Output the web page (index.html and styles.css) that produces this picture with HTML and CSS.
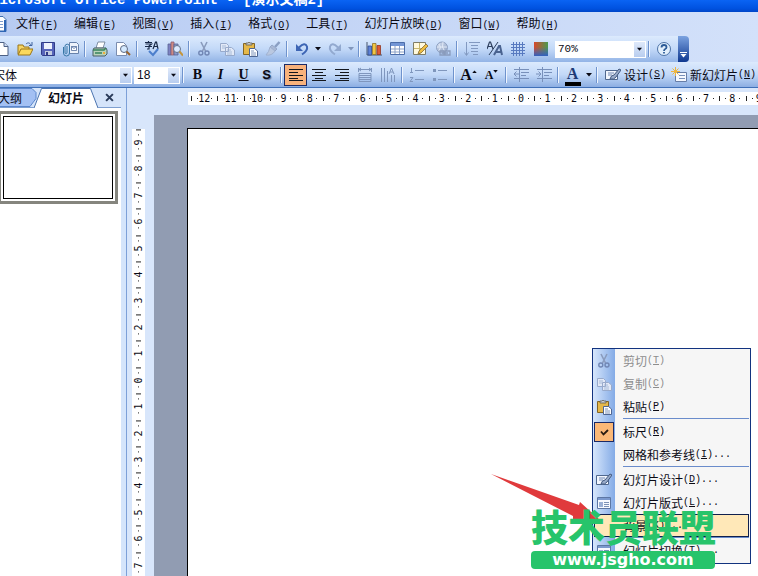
FILE: index.html
```html
<!DOCTYPE html>
<html lang="zh-CN">
<head>
<meta charset="utf-8">
<title>Microsoft Office PowerPoint - [演示文稿2]</title>
<link rel="stylesheet" href="styles.css">
</head>
<body>
<svg class="defs" aria-hidden="true">
  <defs>
    <linearGradient id="g-gray" x1="0" y1="0" x2="1" y2="1"><stop offset="0" stop-color="#d5dff0"/><stop offset="1" stop-color="#8fa3c4"/></linearGradient>
    <linearGradient id="g-r" x1="0" y1="0" x2="1" y2="0"><stop offset="0" stop-color="#d8482c"/><stop offset="1" stop-color="#4a9a50"/></linearGradient>
    <linearGradient id="g-b" x1="0" y1="0" x2="0" y2="1"><stop offset=".35" stop-color="#3565c8" stop-opacity="0"/><stop offset="1" stop-color="#3260c0"/></linearGradient>
  </defs>
  <symbol id="i-new" viewBox="0 0 16 16"><path d="M3 1.5h7l4 4v9H3z" fill="#fff" stroke="#4d6185"/><path d="M10 1.5v4h4" fill="#cddaf0" stroke="#4d6185"/></symbol>
  <symbol id="i-doc" viewBox="0 0 16 16"><path d="M3 .500h8l3 3v12H3z" fill="#fff" stroke="#3f6fae"/><path d="M13 4v11.500H3" fill="none" stroke="#2f66b4" stroke-width="2"/><path d="M5 5.500h6M5 8.500h6M5 11.500h6" stroke="#7d9ccc"/></symbol>
  <symbol id="i-open" viewBox="0 0 16 16"><path d="M1 13V4h5l1 2h5v3" fill="#f5d465" stroke="#9a7417"/><path d="M1 14l3-6h12l-3 6z" fill="#fbd95c" stroke="#9a7417"/><path d="M9 3c2-2 4-1 5 1M15 1v3.500h-3" fill="none" stroke="#3f629f"/></symbol>
  <symbol id="i-save" viewBox="0 0 16 16"><path d="M1.500 1.500h13v13h-12l-1-1z" fill="#5765ba" stroke="#303c88"/><path d="M4 2h8v6H4z" fill="#edf2fc"/><path d="M5 10h7v4H5z" fill="#c4cde0"/><path d="M6 11h2v3H6z" fill="#303c88"/></symbol>
  <symbol id="i-mail" viewBox="0 0 16 16"><path d="M6.500 1.500h7l2 2v9h-9z" fill="#eef3fb" stroke="#6781aa"/><path d="M8.500 5.500h5v4h-5zM8.500 5.500l2.500 2 2.500-2" fill="#fff" stroke="#526d9d" stroke-width=".8"/><path d="M4 5v6.500a1 1 0 0 1-2 0V5a2.300 2.300 0 0 1 4.500 0v7a3 3 0 0 1-6 0V6" fill="none" stroke="#3776a6"/></symbol>
  <symbol id="i-print" viewBox="0 0 16 16"><path d="M6 1h7l-2 6H4z" fill="#fff" stroke="#66778c" stroke-width=".8"/><path d="M2 7h12l1 2v4l-2 2H1V9z" fill="#b8d3bb" stroke="#485e67"/><path d="M1 9h11l2-2M3 12h7" fill="none" stroke="#39835e" stroke-width="1.500"/><path d="M11 12h2" stroke="#efae3a" stroke-width="2"/></symbol>
  <symbol id="i-preview" viewBox="0 0 16 16"><path d="M1.500 1.500h7l3 3v10h-10z" fill="#fff" stroke="#7b8daf"/><circle cx="9" cy="8" r="3.500" fill="#d5eaff" stroke="#5f6c86"/><path d="M11.500 10.500L15 14" stroke="#9b652c" stroke-width="2"/></symbol>
  <symbol id="i-spell" viewBox="0 0 16 16"><path d="M1 1.500h7M4.500 0v2M1.500 3h6L5 5v3H3M1 5.500h7M9 8l2.500-7h1L14 8M10 5.500h4" fill="none" stroke="#182947" stroke-width="1.200"/><path d="M5 10l4 4 5-6" fill="none" stroke="#4d7fcc" stroke-width="2"/></symbol>
  <symbol id="i-research" viewBox="0 0 16 16"><path d="M1 3h3v11H1z" fill="#7d83c3" stroke="#596393" stroke-width=".8"/><path d="M4 1h3v13H4z" fill="#cf8b83" stroke="#8b5d73" stroke-width=".8"/><path d="M7 3h4v11H7z" fill="#8998ca" stroke="#596393" stroke-width=".8"/><circle cx="10" cy="8" r="3.500" fill="#dceaff" stroke="#64728a"/><path d="M12.500 10.500L16 14.500" stroke="#c4953c" stroke-width="2"/></symbol>
  <symbol id="i-cut" viewBox="0 0 16 16"><path d="M5 1l4.500 9M11 1L6.500 10" fill="none" stroke="#8a9bbd" stroke-width="1.600"/><circle cx="4.800" cy="12" r="2" fill="none" stroke="#7186b4" stroke-width="1.400"/><circle cx="11" cy="12" r="2" fill="none" stroke="#7186b4" stroke-width="1.400"/></symbol>
  <symbol id="i-copy" viewBox="0 0 16 16"><path d="M1.500 2.500h6l2 2v6h-8zM6.500 6.500h6l3 2.500v5.500h-9z" fill="#e2e9f7" stroke="#98aacb"/><path d="M3 5h4M3 7h3M8 9h4M8 11h5M8 13h5" stroke="#9baed0" stroke-width=".8"/></symbol>
  <symbol id="i-paste" viewBox="0 0 16 16"><path d="M1.500 2.500h11v11h-11z" fill="#e5b84a" stroke="#836525"/><path d="M4 4V2h2q1-2 2 0h2v2z" fill="#c6cad2" stroke="#665e4a" stroke-width=".8"/><path d="M7.500 7.500h5l3 2.500v5.500h-8z" fill="#fff" stroke="#4f6692"/><path d="M9 10h3M9 12h5M9 14h5" stroke="#5d78a8" stroke-width=".8"/></symbol>
  <symbol id="i-brush" viewBox="0 0 16 16"><path d="M14.500 1L10 6" stroke="#8a9fc3" stroke-width="2.500"/><path d="M7 4l5 4-2 2-5-4z" fill="#a8b8d4" stroke="#93a6c8"/><path d="M5 6l5 4q-3 5-9 4 3-3 4-8z" fill="#bac8e0" stroke="#a0b1d0"/></symbol>
  <symbol id="i-undo" viewBox="0 0 16 16"><path d="M5 6.500q6-6 8-1 1 4-5 8" fill="none" stroke="#3d65b4" stroke-width="2"/><path d="M2 3v7h7z" fill="#3d65b4"/></symbol>
  <symbol id="i-redo" viewBox="0 0 16 16"><path d="M11 6.500q-6-6-8-1-1 4 5 8" fill="none" stroke="#92a9cf" stroke-width="2"/><path d="M14 3v7H7z" fill="#92a9cf"/></symbol>
  <symbol id="i-chart" viewBox="0 0 16 16"><path d="M1 1v13h15" fill="none" stroke="#45546d"/><path d="M2 5h3.500v9H2z" fill="#5e82d7" stroke="#314b90" stroke-width=".8"/><path d="M6.500 2.500H10v11H6.500z" fill="#f2c643" stroke="#8f7225" stroke-width=".8"/><path d="M11 4.500h3.500v9H11z" fill="#df5934" stroke="#903520" stroke-width=".8"/></symbol>
  <symbol id="i-table" viewBox="0 0 16 16"><path d="M1.500 1.500h14v12h-14z" fill="#fff" stroke="#4b6da9"/><path d="M2 2h13v3H2z" fill="#7396d5"/><path d="M2 8h13M2 11h13M6 5v8M10.500 5v8" stroke="#8ba1c6"/></symbol>
  <symbol id="i-draw" viewBox="0 0 16 16"><path d="M1.500 1.500h12v12h-12z" fill="#fff9dd" stroke="#7e7d68"/><path d="M2 7.500h11M7.500 2v11" stroke="#c8b86e"/><path d="M6 13l1-3 7-7 2 2-7 7z" fill="#efbe42" stroke="#836935" stroke-width=".8"/></symbol>
  <symbol id="i-link" viewBox="0 0 16 16"><circle cx="7" cy="6.500" r="5.500" fill="url(#g-gray)" stroke="#8ea1c2"/><path d="M4 3q3 3 0 7M8 1q-2 5 2 10M2 6h10" fill="none" stroke="#e3ebf7"/><path d="M5 10h4v4H5zM10 10h5v4h-5zM7 12h6" fill="none" stroke="#899bbc" stroke-width="1.300"/></symbol>
  <symbol id="i-expand" viewBox="0 0 16 16"><path d="M2.500 1v13M.500 11.500l2 3 2-3M5 1.500h11M7 4.500h7M7 7.500h7M7 10.500h7M9 13.500h5" fill="none" stroke="#8299c0"/></symbol>
  <symbol id="i-format" viewBox="0 0 16 16"><path d="M0 8l2.500-7h1L6 8M1 5.500h4" fill="none" stroke="#2e405e" stroke-width="1.200"/><path d="M7 14l5-9h1l2 9M9 11h5" fill="none" stroke="#4a6390" stroke-width="2"/><path d="M11 1L2 14" stroke="#2e405e"/></symbol>
  <symbol id="i-grid" viewBox="0 0 16 16"><path d="M3.500 1v14M6.500 1v14M9.500 1v14M12.500 1v14M1 3.500h14M1 6.500h14M1 9.500h14M1 12.500h14" stroke="#587ac0"/></symbol>
  <symbol id="i-color" viewBox="0 0 16 16"><path d="M1 1h14v14H1z" fill="url(#g-r)"/><path d="M1 1h14v14H1z" fill="url(#g-b)"/></symbol>
  <symbol id="i-help" viewBox="0 0 16 16"><circle cx="8" cy="8" r="6.500" fill="#e2effc" stroke="#4d73a7"/><path d="M5.500 6.500q0-2.500 2.500-2.500t2.500 2.200q0 1.300-1.300 1.800Q8 8.600 8 10M8 11v1.500" fill="none" stroke="#2d5c98" stroke-width="1.800"/></symbol>
  <symbol id="i-left" viewBox="0 0 16 16"><path d="M1 2.500h14M1 5.500h9M1 8.500h14M1 11.500h9" stroke="#14171d"/><path d="M1 13.500h14" stroke="#14171d"/></symbol>
  <symbol id="i-center" viewBox="0 0 16 16"><path d="M1 2.500h14M4 5.500h8M1 8.500h14M4 11.500h8M1 13.500h14" stroke="#14171d"/></symbol>
  <symbol id="i-right" viewBox="0 0 16 16"><path d="M1 2.500h14M6 5.500h9M1 8.500h14M6 11.500h9M1 13.500h14" stroke="#14171d"/></symbol>
  <symbol id="i-dist" viewBox="0 0 16 16"><path d="M1.500 1v4M14.500 1v4M2 2.500h12M4 1L2 2.500 4 4M12 1l2 1.500L12 4M2 6.500h12v8H2zM2 8.500h12M2 10.500h12M2 12.500h12" fill="none" stroke="#7f96bd"/></symbol>
  <symbol id="i-vert" viewBox="0 0 16 16"><path d="M1.500 1v14M4.500 1v14M7.500 4v11M14.500 8v7M9 7l2.500-6L14 7M10 5h3M11.500 8v7" fill="none" stroke="#7f96bd"/></symbol>
  <symbol id="i-num" viewBox="0 0 16 16"><path d="M6 3.500h9M6 12.500h9M2.500 1v4M1 5.500h3M1 10.500h3l-3 4h3" fill="none" stroke="#8097bd"/></symbol>
  <symbol id="i-bul" viewBox="0 0 16 16"><path d="M6 3.500h9M6 12.500h9" stroke="#8097bd"/><path d="M1 2h3v3H1zM1 11h3v3H1z" fill="#8097bd"/></symbol>
  <symbol id="i-outdent" viewBox="0 0 16 16"><path d="M1 2.500h15M8 5.500h8M8 8.500h5M1 11.500h15M1 7h5M3.500 4.500L1 7l2.500 2.500M6.500 0v15" fill="none" stroke="#7890ba"/></symbol>
  <symbol id="i-indent" viewBox="0 0 16 16"><path d="M1 2.500h15M8 5.500h8M8 8.500h5M1 11.500h15M0 7h5M2.500 4.500L5 7 2.500 9.500M6.500 0v15" fill="none" stroke="#7890ba"/></symbol>
  <symbol id="i-design" viewBox="0 0 16 16"><path d="M.500 3.500h12v9H.500z" fill="#f2f6fd" stroke="#50688e"/><path d="M3 6h6M3 8h4" stroke="#7087b1"/><path d="M5 12q1-4 4-4l5-6 2 1-5 7q-2 3-6 2z" fill="#9aacca" stroke="#435a80"/></symbol>
  <symbol id="i-slide" viewBox="0 0 16 16"><path d="M4.500 5.500h11v9h-11z" fill="#f5f8fe" stroke="#667da7"/><path d="M8 8.500h6M8 11.500h6" stroke="#7890ba"/><path d="M4.500 0v9M0 4.500h9M1.500 1.500l6 6M7.500 1.500l-6 6" stroke="#eeb640"/></symbol>
  <symbol id="i-layout" viewBox="0 0 16 16"><path d="M1.500 2.500h13v11h-13z" fill="#f7faff" stroke="#5d77a4"/><path d="M2 3h12v2H2z" fill="#7b99ce"/><path d="M3 7h4v5H3z" fill="#9bb1d6"/><path d="M8 7.500h5M8 9.500h5M8 11.500h5" stroke="#7c92b7"/></symbol>
  <symbol id="i-check" viewBox="0 0 16 16"><path d="M5 7.500l2.500 3L12 6" fill="none" stroke="#2b1c12" stroke-width="1.800"/></symbol>
  <symbol id="i-down" viewBox="0 0 6 4"><path d="M0 0h6L3 3.500z" fill="currentColor"/></symbol>
</svg>

<header class="chrome">
  <div class="titlebar"><h1>Microsoft Office PowerPoint - [<span class="doc">演示文稿</span>2]</h1></div>
  <nav class="menubar" aria-label="菜单栏">
    <svg class="docicon" aria-hidden="true"><use href="#i-doc"/></svg>
    <button>文件<span class="key">(<u>F</u>)</span></button>
    <button>编辑<span class="key">(<u>E</u>)</span></button>
    <button>视图<span class="key">(<u>V</u>)</span></button>
    <button>插入<span class="key">(<u>I</u>)</span></button>
    <button>格式<span class="key">(<u>O</u>)</span></button>
    <button>工具<span class="key">(<u>T</u>)</span></button>
    <button>幻灯片放映<span class="key">(<u>D</u>)</span></button>
    <button>窗口<span class="key">(<u>W</u>)</span></button>
    <button>帮助<span class="key">(<u>H</u>)</span></button>
  </nav>

  <div class="toolbar standard" role="toolbar" aria-label="常用">
    <button class="tool" aria-label="新建"><svg><use href="#i-new"/></svg></button>
    <button class="tool" aria-label="打开"><svg><use href="#i-open"/></svg></button>
    <button class="tool" aria-label="保存"><svg><use href="#i-save"/></svg></button>
    <button class="tool" aria-label="电子邮件"><svg><use href="#i-mail"/></svg></button>
    <span class="sep"></span>
    <button class="tool" aria-label="打印"><svg><use href="#i-print"/></svg></button>
    <button class="tool" aria-label="打印预览"><svg><use href="#i-preview"/></svg></button>
    <span class="sep"></span>
    <button class="tool" aria-label="拼写检查"><svg><use href="#i-spell"/></svg></button>
    <button class="tool" aria-label="信息检索"><svg><use href="#i-research"/></svg></button>
    <span class="sep"></span>
    <button class="tool" aria-label="剪切"><svg><use href="#i-cut"/></svg></button>
    <button class="tool" aria-label="复制"><svg><use href="#i-copy"/></svg></button>
    <button class="tool" aria-label="粘贴"><svg><use href="#i-paste"/></svg></button>
    <button class="tool" aria-label="格式刷"><svg><use href="#i-brush"/></svg></button>
    <span class="sep"></span>
    <button class="tool" aria-label="撤消"><svg><use href="#i-undo"/></svg></button>
    <button class="drop" aria-label="撤消列表"><svg><use href="#i-down"/></svg></button>
    <button class="tool" aria-label="恢复"><svg><use href="#i-redo"/></svg></button>
    <button class="drop dim" aria-label="恢复列表"><svg><use href="#i-down"/></svg></button>
    <span class="sep"></span>
    <button class="tool" aria-label="插入图表"><svg><use href="#i-chart"/></svg></button>
    <button class="tool" aria-label="插入表格"><svg><use href="#i-table"/></svg></button>
    <button class="tool" aria-label="表格和边框"><svg><use href="#i-draw"/></svg></button>
    <button class="tool" aria-label="超链接"><svg><use href="#i-link"/></svg></button>
    <span class="sep"></span>
    <button class="tool" aria-label="全部展开"><svg><use href="#i-expand"/></svg></button>
    <button class="tool" aria-label="显示格式"><svg><use href="#i-format"/></svg></button>
    <button class="tool" aria-label="网格"><svg><use href="#i-grid"/></svg></button>
    <button class="tool" aria-label="颜色"><svg><use href="#i-color"/></svg></button>
    <span class="combo zoom"><select aria-label="显示比例"><option>70%</option></select><svg><use href="#i-down"/></svg></span>
    <span class="sep"></span>
    <button class="tool" aria-label="帮助"><svg><use href="#i-help"/></svg></button>
    <button class="cap" aria-label="工具栏选项"><svg><use href="#i-down"/></svg></button>
  </div>

  <div class="toolbar formatting" role="toolbar" aria-label="格式">
    <span class="combo face"><select aria-label="字体"><option>宋体</option></select><svg><use href="#i-down"/></svg></span>
    <span class="combo size"><select aria-label="字号"><option>18</option></select><svg><use href="#i-down"/></svg></span>
    <span class="sep"></span>
    <button class="tool letter" aria-label="加粗"><b>B</b></button>
    <button class="tool letter" aria-label="倾斜"><i>I</i></button>
    <button class="tool letter" aria-label="下划线"><u>U</u></button>
    <button class="tool letter shadow" aria-label="阴影">S</button>
    <span class="sep"></span>
    <button class="tool on" aria-label="左对齐"><svg><use href="#i-left"/></svg></button>
    <button class="tool" aria-label="居中"><svg><use href="#i-center"/></svg></button>
    <button class="tool" aria-label="右对齐"><svg><use href="#i-right"/></svg></button>
    <button class="tool" aria-label="分散对齐"><svg><use href="#i-dist"/></svg></button>
    <button class="tool" aria-label="文字方向"><svg><use href="#i-vert"/></svg></button>
    <span class="sep"></span>
    <button class="tool" aria-label="编号"><svg><use href="#i-num"/></svg></button>
    <button class="tool" aria-label="项目符号"><svg><use href="#i-bul"/></svg></button>
    <span class="sep"></span>
    <button class="tool letter grow" aria-label="增大字号">A<svg class="up"><use href="#i-down"/></svg></button>
    <button class="tool letter shrink" aria-label="减小字号">A<svg><use href="#i-down"/></svg></button>
    <span class="sep"></span>
    <button class="tool" aria-label="减少缩进量"><svg><use href="#i-outdent"/></svg></button>
    <button class="tool" aria-label="增加缩进量"><svg><use href="#i-indent"/></svg></button>
    <span class="sep"></span>
    <button class="tool letter fontcolor" aria-label="字体颜色">A</button>
    <button class="drop" aria-label="字体颜色列表"><svg><use href="#i-down"/></svg></button>
    <span class="sep"></span>
    <button class="wide"><svg><use href="#i-design"/></svg>设计<span class="key">(<u>S</u>)</span></button>
    <button class="wide"><svg><use href="#i-slide"/></svg>新幻灯片<span class="key">(<u>N</u>)</span></button>
  </div>
</header>

<main class="workspace">
  <aside class="outline">
    <div class="tabs">
      <button class="tab back"><svg viewBox="0 0 50 19" aria-hidden="true"><path d="M0 .500h42l4 4v6l-6 8H0z" fill="#a3c0f3" stroke="#5a86cc"/></svg><span>大纲</span></button>
      <button class="tab front"><svg viewBox="0 0 64 20" aria-hidden="true"><path d="M0 20L7.500.500h49L64 20z" fill="#fff"/><path d="M0 20L7.500.500h49L64 20" fill="none" stroke="#4c74b0"/></svg><span>幻灯片</span></button>
      <button class="close" aria-label="关闭"><svg viewBox="0 0 8 8"><path d="M1 1l6 6M7 1L1 7" stroke="#2a3b5a" stroke-width="1.800"/></svg></button>
    </div>
    <div class="thumb"><div></div></div>
  </aside>
  <section class="editor">
    <ol class="ruler across">
      <li>12</li><li>11</li><li>10</li><li>9</li><li>8</li><li>7</li><li>6</li><li>5</li><li>4</li><li>3</li><li>2</li><li>1</li><li>0</li><li>1</li><li>2</li><li>3</li><li>4</li><li>5</li><li>6</li><li>7</li><li>8</li><li>9</li>
    </ol>
    <ol class="ruler down">
      <li>9</li><li>8</li><li>7</li><li>6</li><li>5</li><li>4</li><li>3</li><li>2</li><li>1</li><li>0</li><li>1</li><li>2</li><li>3</li><li>4</li><li>5</li><li>6</li><li>7</li>
    </ol>
    <div class="canvas"><div class="slide"></div></div>
  </section>
</main>

<div class="context" role="menu">
  <button role="menuitem" disabled><svg><use href="#i-cut"/></svg>剪切<span class="key">(<u>T</u>)</span></button>
  <button role="menuitem" disabled><svg><use href="#i-copy"/></svg>复制<span class="key">(<u>C</u>)</span></button>
  <button role="menuitem"><svg><use href="#i-paste"/></svg>粘贴<span class="key">(<u>P</u>)</span></button>
  <hr>
  <button role="menuitem"><svg class="checked"><use href="#i-check"/></svg>标尺<span class="key">(<u>R</u>)</span></button>
  <button role="menuitem" class="plain">网格和参考线<span class="key">(<u>I</u>)...</span></button>
  <hr>
  <button role="menuitem"><svg><use href="#i-design"/></svg>幻灯片设计<span class="key">(<u>D</u>)...</span></button>
  <button role="menuitem"><svg><use href="#i-layout"/></svg>幻灯片版式<span class="key">(<u>L</u>)...</span></button>
  <button role="menuitem" class="plain hot">背景<span class="key">(<u>K</u>)...</span></button>
  <hr>
  <button role="menuitem"><svg><use href="#i-layout"/></svg>幻灯片切换<span class="key">(<u>T</u>)...</span></button>
</div>

<svg class="arrow" viewBox="0 0 112 52" aria-hidden="true"><path d="M0 0L88 31 89 28 110 47 82 46 82 42z" fill="#e03a3c"/></svg>

<div class="mark">
  <strong>技术员联盟</strong>
  <span>www.jsgho.com</span>
</div>
</body>
</html>
```

FILE: styles.css
```css
* { box-sizing: border-box; }

html, body { height: 100%; }

body {
  margin: 0;
  position: relative;
  display: flex;
  flex-direction: column;
  overflow: hidden;
  background: #fff;
  color: #0a0a14;
  font: 12px/16px "Noto Sans CJK SC", sans-serif;
}

button {
  margin: 0;
  padding: 0;
  border: 0;
  background: none;
  color: inherit;
  font: inherit;
  white-space: nowrap;
}

svg { display: block; width: 16px; height: 16px; flex: none; }
.defs { position: absolute; width: 0; height: 0; }
.key { font: 10px/16px "Liberation Mono", monospace; }

/* window chrome */
.chrome { flex: none; background: linear-gradient(90deg, #b7cbf2, #d3e1fa); border-bottom: 1px solid #3f70b8; }

.titlebar {
  height: 12px;
  display: flex;
  align-items: flex-end;
  overflow: hidden;
  background: linear-gradient(#0a64f4, #0052e0 70%, #0046c8);
}
.titlebar h1 {
  margin: 0 0 4px -9px;
  color: #fff;
  font: bold 14px/16px "Liberation Mono", monospace;
  white-space: nowrap;
}
.doc { font: bold 14px/16px "Noto Sans CJK SC", sans-serif; }

.menubar { display: flex; align-items: center; gap: 16px; height: 24px; overflow: hidden; }
.docicon { margin: 0 -8px 0 -8px; }

.toolbar { display: flex; align-items: center; height: 26px; margin-left: -10px; }
.standard {
  width: fit-content;
  border-radius: 0 4px 4px 0;
  background: linear-gradient(#dceafd, #c3d9f8 50%, #93b4e6);
}
.formatting {
  height: 25px;
  padding-top: 1px;
  overflow: hidden;
  background: linear-gradient(#dceafd, #c3d9f8 50%, #8caee2);
}
.tool { display: flex; align-items: center; justify-content: center; width: 23px; height: 22px; flex: none; }
.drop { display: flex; align-items: center; justify-content: center; width: 10px; height: 22px; flex: none; }
.drop svg { width: 6px; height: 4px; }
.dim { color: #8196bb; }
.sep {
  flex: none;
  width: 6px;
  height: 16px;
  background: linear-gradient(90deg, transparent 2px, #6f93cd 2px, #6f93cd 3px, #eff5fe 3px, #eff5fe 4px, transparent 4px);
}
.on { border: 1px solid #1b2a66; background: #f8b27c; }

.letter { font: bold 14px/16px "Liberation Serif", serif; }
.letter svg { width: 5px; height: 3px; margin-bottom: 8px; }
.shadow { font: bold 13px/16px "Liberation Sans", sans-serif; text-shadow: 1px 1px 1px #67799b; }
.grow { font-size: 16px; }
.shrink { font-size: 12px; }
.up { transform: rotate(180deg); }
.fontcolor {
  padding-bottom: 3px;
  background: linear-gradient(#000, #000) 50% 18px / 16px 4px no-repeat;
  color: #1d3a75;
  font-size: 16px;
}

.combo { display: grid; flex: none; height: 17px; background: #fff; }
.combo > * { grid-area: 1 / 1; }
.combo select {
  width: 100%;
  height: 17px;
  margin: 0;
  padding: 0 3px;
  border: 0;
  appearance: none;
  background: transparent;
  color: #0a0a14;
  font: 12px/16px "Noto Sans CJK SC", sans-serif;
}
.combo svg {
  justify-self: end;
  width: 11px;
  height: 15px;
  margin: 1px;
  padding: 5px 3px;
  background: linear-gradient(#dfe9fa, #b8cdef);
  pointer-events: none;
}
.zoom { width: 91px; margin-left: 3px; }
.zoom select { font: 11px/16px "Liberation Mono", monospace; }
.size select { font: 12px/16px "Liberation Sans", sans-serif; }
.face { width: 142px; }
.size { width: 46px; margin-left: 2px; }

.cap {
  display: flex;
  align-items: flex-end;
  justify-content: center;
  width: 11px;
  height: 26px;
  margin-left: 3px;
  padding-bottom: 4px;
  border-radius: 0 4px 4px 0;
  background: linear-gradient(#7ba2e0, #0f3890);
  color: #fff;
}
.cap svg { width: 7px; height: 6px; border-top: 1px solid #fff; padding-top: 1px; }

.wide { display: flex; align-items: center; flex: none; height: 22px; padding-left: 5px; }
.wide svg { margin-right: 3px; }

/* workspace */
.workspace { flex: 1; min-height: 0; display: grid; grid-template-columns: 127px minmax(0, 1fr); }

.outline {
  display: flex;
  flex-direction: column;
  min-height: 0;
  border-right: 1px solid #7da0d8;
  background: linear-gradient(90deg, #fff 121px, #d5e5fb 121px);
}
.tabs { display: flex; height: 20px; margin-right: 5px; background: #d5e4fa; border-bottom: 1px solid #7e9fd0; }
.tab { display: grid; flex: none; height: 19px; }
.tab > * { grid-area: 1 / 1; z-index: 1; }
.tab span { align-self: center; }
.tab svg { width: 100%; height: 19px; }
.back { width: 50px; margin-left: -10px; }
.back span { justify-self: start; padding-left: 8px; }
.front { width: 64px; margin-left: -6px; font-weight: bold; z-index: 1; }
.front svg { height: 20px; }
.close { width: 24px; display: flex; align-items: center; justify-content: center; }
.close svg { width: 9px; height: 9px; }

.thumb { width: 120px; height: 93px; margin: 3px 0 0 -2px; padding: 2px; border: 3px solid #85857e; background: #fff; }
.thumb div { height: 100%; border: 1px solid #000; }

.editor {
  display: grid;
  grid-template-columns: 27px minmax(0, 1fr);
  grid-template-rows: 27px minmax(0, 1fr);
  min-width: 0;
  min-height: 0;
  background: #d8e6fb;
}
.ruler {
  display: grid;
  margin: 0;
  padding: 0;
  list-style: none;
  background: #fff;
  font: 10px/12px "DejaVu Sans Mono", monospace;
}
.ruler li {
  display: flex;
  align-items: center;
  justify-content: center;
  background-repeat: no-repeat;
  background-image: linear-gradient(#222, #222), linear-gradient(#222, #222), linear-gradient(#222, #222);
}
.across {
  grid-column: 2;
  grid-template-columns: repeat(22, 1fr);
  height: 13px;
  margin: 4px -14px 0 34px;
  padding-left: 3px;
}
.across li { min-width: 0; background-size: 1px 5px, 1px 1px, 1px 1px; background-position: 0 50%, 24% 50%, 78% 50%; }
.down {
  grid-row: 2;
  grid-template-rows: repeat(17, 1fr);
  width: 13px;
  margin: 14px 0 -2px 5px;
}
.down li {
  min-height: 0;
  writing-mode: vertical-rl;
  transform: rotate(180deg);
  background-size: 5px 1px, 1px 1px, 1px 1px;
  background-position: 50% 100%, 50% 22%, 50% 78%;
}
.canvas { grid-area: 2 / 2; display: flex; padding: 13px 0 0 33px; background: #919cb2; }
.slide { flex: 1; border: solid #000; border-width: 1px 0 0 1px; background: #fff; }

/* context menu */
.context {
  position: absolute;
  left: 592px;
  top: 348px;
  width: 159px;
  padding: 0 1px 1px;
  border: 1px solid #12337f;
  background: linear-gradient(90deg, #d6e6fc, #84abe6 22px, #f6f6f6 22px);
}
.context button { display: flex; align-items: center; width: 100%; height: 23px; padding-left: 1px; }
.context svg { margin: 0 11px 0 1px; }
.context svg.checked { width: 20px; height: 20px; margin: 0 9px 0 -1px; padding: 1px; border: 1px solid #1b2a66; background: #fbb877; }
.context button:disabled { color: #8d8d8d; }
.context .plain { padding-left: 29px; }
.context .hot { padding-left: 28px; border: 1px solid #10204e; background: #ffe8b8; }
.context hr { height: 1px; margin: 0 0 1px 29px; border: 0; background: #6a8ccb; }

/* annotation and site mark */
.arrow { position: absolute; left: 491px; top: 474px; width: 112px; height: 52px; }
.mark { position: absolute; left: 531px; top: 507px; width: 184px; display: flex; flex-direction: column; color: #27c46b; }
.mark strong { font: 900 37px/38px "Noto Sans CJK SC", sans-serif; white-space: nowrap; }
.mark span {
  margin-top: 6px;
  border-radius: 4px;
  background: #27c46b;
  color: #fff;
  font: bold 16px/18px "DejaVu Sans", sans-serif;
  text-align: center;
}
```
